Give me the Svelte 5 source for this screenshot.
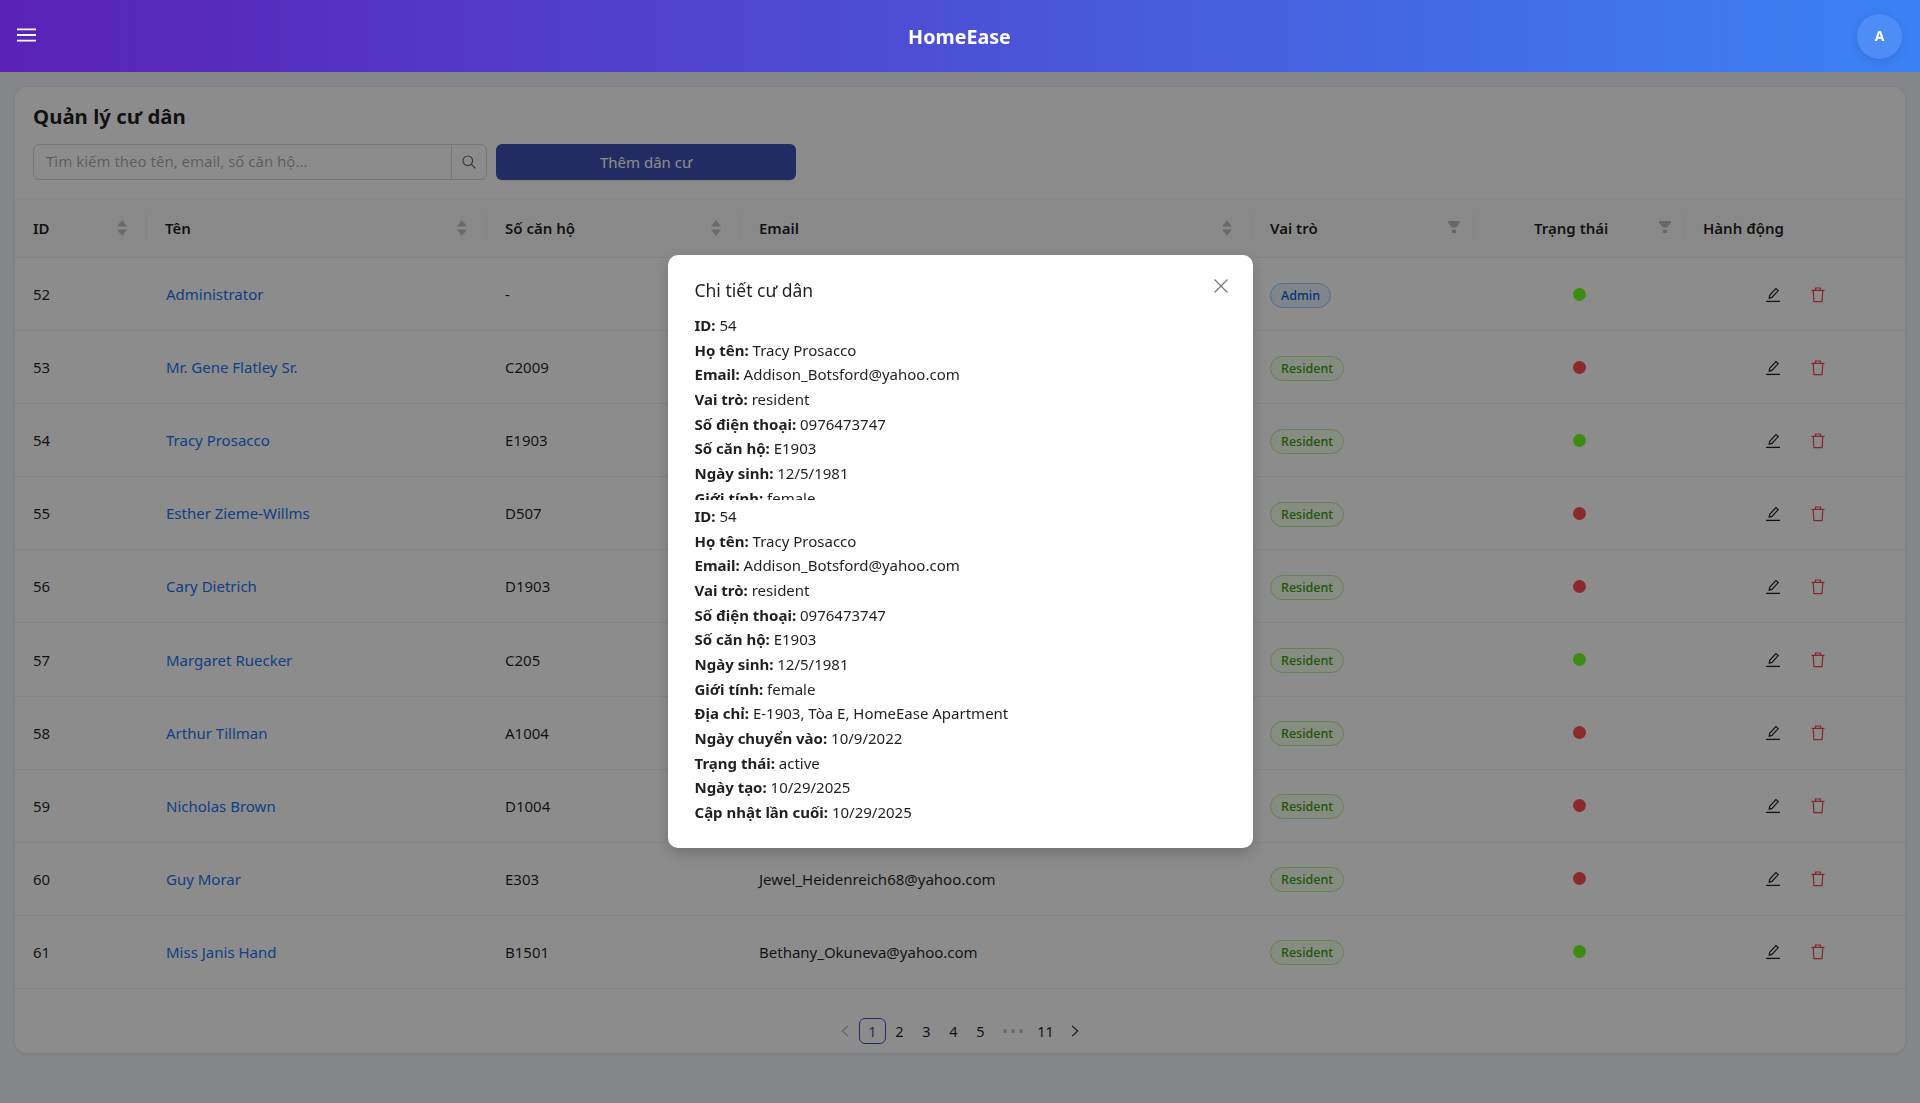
<script>
  const residents = [
    { id: 52, name: "Administrator", unit: "-", email: "", role: "Admin", active: true },
    { id: 53, name: "Mr. Gene Flatley Sr.", unit: "C2009", email: "", role: "Resident", active: false },
    { id: 54, name: "Tracy Prosacco", unit: "E1903", email: "Addison_Botsford@yahoo.com", role: "Resident", active: true },
    { id: 55, name: "Esther Zieme-Willms", unit: "D507", email: "", role: "Resident", active: false },
    { id: 56, name: "Cary Dietrich", unit: "D1903", email: "", role: "Resident", active: false },
    { id: 57, name: "Margaret Ruecker", unit: "C205", email: "", role: "Resident", active: true },
    { id: 58, name: "Arthur Tillman", unit: "A1004", email: "", role: "Resident", active: false },
    { id: 59, name: "Nicholas Brown", unit: "D1004", email: "", role: "Resident", active: false },
    { id: 60, name: "Guy Morar", unit: "E303", email: "Jewel_Heidenreich68@yahoo.com", role: "Resident", active: false },
    { id: 61, name: "Miss Janis Hand", unit: "B1501", email: "Bethany_Okuneva@yahoo.com", role: "Resident", active: true },
  ];

  const details = [
    ["ID", "54"],
    ["Họ tên", "Tracy Prosacco"],
    ["Email", "Addison_Botsford@yahoo.com"],
    ["Vai trò", "resident"],
    ["Số điện thoại", "0976473747"],
    ["Số căn hộ", "E1903"],
    ["Ngày sinh", "12/5/1981"],
    ["Giới tính", "female"],
    ["Địa chỉ", "E-1903, Tòa E, HomeEase Apartment"],
    ["Ngày chuyển vào", "10/9/2022"],
    ["Trạng thái", "active"],
    ["Ngày tạo", "10/29/2025"],
    ["Cập nhật lần cuối", "10/29/2025"],
  ];
</script>

{#snippet sorter()}
  <svg class="sorter" width="10" height="16" viewBox="0 0 10 16"><path d="M5 0 L10 6.5 H0 Z M5 16 L10 9.5 H0 Z" /></svg>
{/snippet}

{#snippet funnel()}
  <svg class="funnel" width="12" height="12" viewBox="0 0 12 12"><path d="M0 0 H12 V1.5 L8.2 6.5 H3.8 L0 1.5 Z M3.9 8.5 H8.1 V12 H3.9 Z" /></svg>
{/snippet}

{#snippet detailBlock()}
  {#each details as [label, value]}
    <p class="detail-line"><strong>{label}:</strong> {value}</p>
  {/each}
{/snippet}

<div class="page">
  <header class="topbar">
    <button class="menu-btn" aria-label="menu">
      <svg width="19" height="14" viewBox="0 0 19 14"><path d="M0 1.3 H19 M0 7 H19 M0 12.7 H19" stroke="#fff" stroke-width="1.8" /></svg>
    </button>
    <div class="brand">HomeEase</div>
    <div class="avatar">A</div>
  </header>

  <main class="content">
    <section class="card">
      <h1 class="title">Quản lý cư dân</h1>
      <div class="toolbar">
        <div class="search">
          <input class="search-input" placeholder="Tìm kiếm theo tên, email, số căn hộ..." />
          <span class="search-btn">
            <svg width="14" height="14" viewBox="0 0 14 14" fill="none" stroke="#666" stroke-width="1.2"><circle cx="5.8" cy="5.8" r="4.8" /><path d="M9.3 9.3 L13.4 13.4" /></svg>
          </span>
        </div>
        <button class="add-btn">Thêm dân cư</button>
      </div>

      <table class="table">
        <colgroup>
          <col style="width: 132px" />
          <col style="width: 340px" />
          <col style="width: 254px" />
          <col style="width: 511px" />
          <col style="width: 222px" />
          <col style="width: 211px" />
          <col />
        </colgroup>
        <thead>
          <tr>
            <th><div class="th-inner">ID {@render sorter()}</div></th>
            <th><div class="th-inner">Tên {@render sorter()}</div></th>
            <th><div class="th-inner">Số căn hộ {@render sorter()}</div></th>
            <th><div class="th-inner">Email {@render sorter()}</div></th>
            <th><div class="th-inner">Vai trò {@render funnel()}</div></th>
            <th><div class="th-inner th-center"><span class="th-label">Trạng thái</span> {@render funnel()}</div></th>
            <th class="no-divider">Hành động</th>
          </tr>
        </thead>
        <tbody>
          {#each residents as r}
            <tr>
              <td>{r.id}</td>
              <td><a class="name-link" href="#top">{r.name}</a></td>
              <td>{r.unit}</td>
              <td>{r.email}</td>
              <td><span class="tag" class:admin={r.role === "Admin"}>{r.role}</span></td>
              <td class="center"><span class="dot" class:on={r.active}></span></td>
              <td class="center">
                <div class="actions">
                  <svg width="16" height="16" viewBox="0 0 16 16" fill="none" stroke="#222" stroke-width="1.2"><path d="M4.2 11.2 L4.7 8.3 L10.9 1.6 L13.2 3.6 L7 10.4 Z" /><path d="M1 14.4 H15" stroke-width="1.3" /></svg>
                  <svg width="14" height="16" viewBox="0 0 14 16" fill="none" stroke="#f5454a" stroke-width="1.2"><path d="M0.5 3.4 H13.5 M4.5 3.2 V1 H9.5 V3.2 M2.2 3.4 L2.9 14.6 H11.1 L11.8 3.4" /></svg>
                </div>
              </td>
            </tr>
          {/each}
        </tbody>
      </table>

      <nav class="pager">
        <span class="pg arrow muted">
          <svg width="8" height="12" viewBox="0 0 8 12" fill="none" stroke="currentColor" stroke-width="1.1"><path d="M7 0.8 L1.2 6 L7 11.2" /></svg>
        </span>
        <span class="pg current">1</span>
        <span class="pg">2</span>
        <span class="pg">3</span>
        <span class="pg">4</span>
        <span class="pg">5</span>
        <span class="pg dots"><i></i><i></i><i></i></span>
        <span class="pg">11</span>
        <span class="pg arrow next">
          <svg width="8" height="12" viewBox="0 0 8 12" fill="none" stroke="currentColor" stroke-width="1.1"><path d="M1 0.8 L6.8 6 L1 11.2" /></svg>
        </span>
      </nav>
    </section>
  </main>

  <div class="overlay">
    <div class="modal">
      <div class="modal-head">
        <h2 class="modal-title">Chi tiết cư dân</h2>
        <svg class="close" width="14" height="14" viewBox="0 0 14 14" fill="none" stroke="#777" stroke-width="1.2"><path d="M0.5 0.5 L13.5 13.5 M13.5 0.5 L0.5 13.5" /></svg>
      </div>
      <div class="clipped">{@render detailBlock()}</div>
      <div class="full">{@render detailBlock()}</div>
    </div>
  </div>
</div>

<style>
  :global(body) {
    margin: 0;
    background: #f1f5f9;
  }

  .page {
    min-height: 1103px;
    font-family: "Noto Sans", "Open Sans", sans-serif;
    font-size: 15px;
    color: rgba(0, 0, 0, 0.88);
    background: #f1f5f9;
  }

  .topbar {
    height: 72px;
    display: grid;
    grid-template-columns: 1fr auto 1fr;
    align-items: center;
    padding: 0 18px 0 17px;
    background: linear-gradient(90deg, #5b21b6, #3b82f6);
    color: #fff;
    box-sizing: border-box;
    position: relative;
    z-index: 10;
  }

  .menu-btn {
    border: 0;
    padding: 0;
    background: none;
    display: flex;
    margin-top: -3px;
    justify-self: start;
  }

  .brand {
    font-size: 19.7px;
    font-weight: 700;
    padding-top: 1px;
  }

  .avatar {
    justify-self: end;
    width: 45px;
    height: 45px;
    border-radius: 50%;
    display: flex;
    align-items: center;
    justify-content: center;
    font-size: 14px;
    font-weight: 700;
    padding-bottom: 1px;
    box-sizing: border-box;
    background: rgba(255, 255, 255, 0.1);
    box-shadow: 0 2px 8px rgba(0, 0, 0, 0.12);
  }

  .content {
    padding: 15px;
  }

  .card {
    height: 966px;
    box-sizing: border-box;
    padding-top: 15px;
    background: #fff;
    border-radius: 12px;
    box-shadow: 0 1px 4px rgba(0, 0, 0, 0.12);
    overflow: hidden;
  }

  .title {
    margin: 0 18px 14px;
    font-size: 20.4px;
    line-height: 28px;
    font-weight: 700;
  }

  .toolbar {
    display: flex;
    gap: 9px;
    margin: 0 18px 18px;
  }

  .search {
    width: 454px;
    height: 36px;
    display: flex;
    box-sizing: border-box;
    border: 1px solid #d9d9d9;
    border-radius: 6px;
  }

  .search-input {
    flex: 1;
    min-width: 0;
    border: 0;
    outline: 0;
    padding: 0 12px 2px;
    background: none;
    font: inherit;
  }

  .search-input::placeholder {
    color: rgba(0, 0, 0, 0.35);
  }

  .search-btn {
    width: 34px;
    display: flex;
    align-items: center;
    justify-content: center;
    border-left: 1px solid #d9d9d9;
  }

  .add-btn {
    width: 300px;
    height: 36px;
    border: 0;
    border-radius: 6px;
    background: #3f51b5;
    color: #fff;
    font: inherit;
    padding-bottom: 2px;
    box-shadow: 0 2px 0 rgba(0, 0, 0, 0.04);
  }

  .table {
    width: 1890px;
    table-layout: fixed;
    border-collapse: separate;
    border-spacing: 0;
  }

  th {
    height: 60px;
    padding: 0 18px;
    position: relative;
    text-align: left;
    font-weight: 600;
    background: #fafafa;
    border-bottom: 1px solid #f0f0f0;
    box-sizing: border-box;
  }

  th::after {
    content: "";
    position: absolute;
    right: 0;
    top: 17px;
    height: 25px;
    width: 1px;
    background: #f0f0f0;
  }

  th.no-divider::after {
    display: none;
  }

  .th-inner {
    display: flex;
    align-items: center;
    justify-content: space-between;
  }

  .th-center {
    padding-left: 42px;
  }

  .sorter,
  .funnel {
    fill: #bfbfbf;
    flex: none;
    margin-right: 2px;
  }

  .funnel {
    margin-top: -1px;
    margin-right: -4px;
  }

  td {
    height: 73.1px;
    padding: 0 18px;
    border-bottom: 1px solid #f0f0f0;
    box-sizing: border-box;
  }

  td.center {
    text-align: center;
  }

  .name-link {
    color: #1d74f0;
    text-decoration: none;
    margin-left: 1px;
  }

  .tag {
    display: inline-block;
    box-sizing: border-box;
    height: 25px;
    line-height: 23px;
    margin-top: 2px;
    padding: 0 10px;
    border-radius: 13px;
    font-size: 12.5px;
    font-weight: 500;
    background: #f6ffed;
    border: 1px solid #b7eb8f;
    color: #389e0d;
    vertical-align: middle;
  }

  .tag.admin {
    background: #e6f4ff;
    border-color: #91caff;
    color: #0958d9;
  }

  .dot {
    display: block;
    width: 13px;
    height: 13px;
    margin: 0 auto;
    border-radius: 50%;
    background: #ff4d4f;
  }

  .dot.on {
    background: #6ffd23;
  }

  .actions {
    display: flex;
    justify-content: center;
    align-items: center;
    gap: 30px;
    padding: 1px 1px 0 0;
  }

  .pager {
    display: flex;
    justify-content: center;
    align-items: center;
    height: 26px;
    margin-top: 29px;
    font-size: 14.5px;
  }

  .pg {
    width: 27px;
    height: 26px;
    box-sizing: border-box;
    display: flex;
    align-items: center;
    justify-content: center;
    flex: none;
  }

  .arrow {
    width: 28px;
  }

  .next {
    margin-left: 2px;
  }

  .muted {
    color: rgba(0, 0, 0, 0.3);
  }

  .current {
    border: 1px solid #3f51b5;
    border-radius: 6px;
    color: #3f51b5;
  }

  .dots {
    width: 38px;
    gap: 4px;
  }

  .dots i {
    width: 4px;
    height: 4px;
    border-radius: 50%;
    background: rgba(0, 0, 0, 0.25);
  }

  .overlay {
    position: fixed;
    inset: 0;
    display: flex;
    align-items: center;
    justify-content: center;
    background: rgba(0, 0, 0, 0.45);
  }

  .modal {
    width: 585px;
    height: 593px;
    box-sizing: border-box;
    padding: 20px 27px 23px;
    background: #fff;
    border-radius: 10px;
    box-shadow: 0 6px 16px rgba(0, 0, 0, 0.2);
    position: relative;
    z-index: 20;
  }

  .modal-head {
    display: flex;
    justify-content: space-between;
    align-items: flex-start;
    height: 38px;
  }

  .modal-title {
    margin: 0;
    font-size: 17.5px;
    line-height: 30px;
    font-weight: 400;
  }

  .close {
    margin-top: 4px;
    margin-right: -2px;
  }

  .clipped {
    height: 187px;
    overflow: hidden;
    margin-bottom: 4px;
  }

  .detail-line {
    margin: 0;
    line-height: 24.67px;
  }

  .detail-line strong {
    font-weight: 700;
  }
</style>
